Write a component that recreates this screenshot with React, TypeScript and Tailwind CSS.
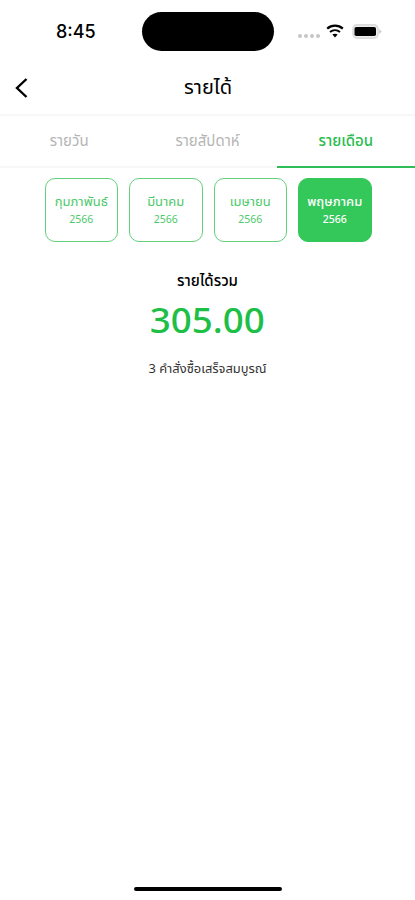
import React, { useState } from 'react';

const tabs = [
  { id: 'day', label: 'รายวัน' },
  { id: 'week', label: 'รายสัปดาห์' },
  { id: 'month', label: 'รายเดือน' },
];

const months = [
  { id: 2, name: 'กุมภาพันธ์', year: '2566' },
  { id: 3, name: 'มีนาคม', year: '2566' },
  { id: 4, name: 'เมษายน', year: '2566' },
  { id: 5, name: 'พฤษภาคม', year: '2566' },
];

const StatusBar = () => (
  <div className="flex h-[62px] items-start">
    <div className="w-[142px] pt-[20px] pl-[56px] font-[Inter,sans-serif] text-[18px] leading-6 font-medium">8:45</div>
    <div className="mt-[12px] h-[39px] w-[132px] rounded-full bg-black" />
    <div className="flex pt-[24px] pl-[24px]">
      <div className="flex gap-[2px] pt-[10px]">
        {[0, 1, 2, 3].map((dot) => (
          <span key={dot} className="h-1 w-1 rounded-full bg-[#c6c6c6]" />
        ))}
      </div>
      <svg className="ml-[6px]" width="18" height="14" viewBox="0 0 18 14" fill="none" aria-hidden="true">
        <path d="M1.2 4.6C5.6 .6 12.4 .6 16.8 4.6" stroke="#000" strokeWidth="2.2" />
        <path d="M4 8C6.9 5.5 11.1 5.5 14 8" stroke="#000" strokeWidth="2" />
        <path d="M6.4 10.6C7.9 9.3 10.1 9.3 11.6 10.6L9 13.5Z" fill="#000" />
      </svg>
      <svg className="ml-[8px]" width="30" height="15" viewBox="0 0 30 15" aria-hidden="true">
        <rect x="1" y=".9" width="25" height="13.2" rx="4" fill="#eee" stroke="#dcdcdc" strokeWidth="1.6" />
        <rect x="2.5" y="3" width="21.5" height="9" rx="1.8" fill="#000" />
        <path d="M27 5V10L29.8 7.5Z" fill="#d0d0d0" />
      </svg>
    </div>
  </div>
);

const App: React.FC = () => {
  const [activeTab, setActiveTab] = useState('month');
  const [activeMonth, setActiveMonth] = useState(5);

  return (
    <div className="flex h-[900px] w-[415px] flex-col overflow-hidden bg-white font-['Noto_Sans_Thai','Noto_Sans',sans-serif] text-black">
      <StatusBar />

      <header className="grid h-[54px] grid-cols-[60px_1fr_60px] items-center border-b-2 border-[#f7f7f7]">
        <button className="pl-[15px]" aria-label="Back">
          <svg width="14" height="20" viewBox="0 0 14 20" fill="none" aria-hidden="true">
            <path d="M11.5 1L2 10L11.5 19" stroke="#000" strokeWidth="2.4" />
          </svg>
        </button>
        <h1 className="pl-px text-center text-[20px] leading-7">รายได้</h1>
      </header>

      <nav className="grid h-[52px] shrink-0 grid-cols-3 text-[15px]">
        {tabs.map((tab) => (
          <button
            key={tab.id}
            onClick={() => setActiveTab(tab.id)}
            className={`border-b-2 pt-[3px] ${
              activeTab === tab.id ? 'border-[#2fbd58] font-medium text-[#29bd4d]' : 'border-[#f7f7f7] text-[#b5b5b5]'
            }`}
          >
            {tab.label}
          </button>
        ))}
      </nav>

      <div className="flex justify-center gap-[11px] pt-[10px] pl-px">
        {months.map((month) => (
          <button
            key={month.id}
            onClick={() => setActiveMonth(month.id)}
            className={`flex h-[64px] w-[73.5px] flex-col items-center justify-center rounded-[10px] border ${
              activeMonth === month.id
                ? 'border-[#34c759] bg-[#34c759] font-medium text-white'
                : 'border-[#63d07d] text-[#4cc96b]'
            }`}
          >
            <span className="text-[13px] leading-5">{month.name}</span>
            <span className="text-[10.5px] leading-4">{month.year}</span>
          </button>
        ))}
      </div>

      <main className="flex flex-1 flex-col items-center pt-[30px]">
        <h2 className="text-[15px] leading-5 font-medium">รายได้รวม</h2>
        <p className="mt-[9px] scale-x-[1.08] text-[34px] leading-[44px] font-medium text-[#1dbf46]">305.00</p>
        <p className="mt-[14px] text-[12.9px] leading-5 text-[#333]">3 คำสั่งซื้อเสร็จสมบูรณ์</p>
      </main>

      <div className="mb-[9px] h-[4px] w-[148px] self-center rounded-full bg-black" />
    </div>
  );
};

export default App;
